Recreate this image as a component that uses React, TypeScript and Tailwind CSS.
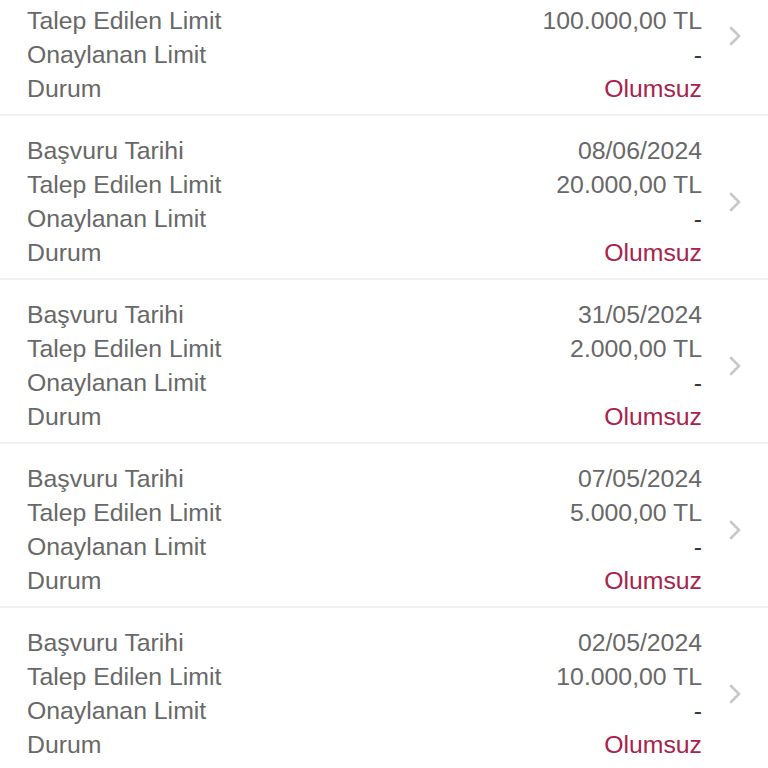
const applications = [
  { date: null, requested: "100.000,00 TL" },
  { date: "08/06/2024", requested: "20.000,00 TL" },
  { date: "31/05/2024", requested: "2.000,00 TL" },
  { date: "07/05/2024", requested: "5.000,00 TL" },
  { date: "02/05/2024", requested: "10.000,00 TL" },
];

function Chevron() {
  return (
    <svg width="14" height="22" viewBox="0 0 14 22" fill="none" className="shrink-0">
      <path d="M3 3l8 8-8 8" stroke="#c7c7cc" strokeWidth="2.6" strokeLinecap="round" strokeLinejoin="round" />
    </svg>
  );
}

function Row({ label, children }: { label: string; children: React.ReactNode }) {
  return (
    <div className="flex h-[34px] items-center justify-between">
      <span>{label}</span>
      {children}
    </div>
  );
}

export default function App() {
  return (
    <div className="h-[768px] overflow-hidden bg-white font-['Liberation_Sans',Arial,sans-serif] text-[24.8px] text-[#686868]">
      {applications.map((app) => (
        <div
          key={app.requested}
          className={
            app.date
              ? "flex items-center border-b-2 border-[#f1f1f1] pb-[8px] pl-[27px] pr-[26px] pt-[18px]"
              : "flex items-center border-b-2 border-[#f1f1f1] pb-[8px] pl-[27px] pr-[26px] pt-[4px]"
          }
        >
          <div className="flex-1">
            {app.date && (
              <Row label="Başvuru Tarihi">
                <span>{app.date}</span>
              </Row>
            )}
            <Row label="Talep Edilen Limit">
              <span>{app.requested}</span>
            </Row>
            <Row label="Onaylanan Limit">
              <span className="text-[#333333]">-</span>
            </Row>
            <Row label="Durum">
              <span className="text-[#a8224a]">Olumsuz</span>
            </Row>
          </div>
          <div className={app.date ? "ml-[26px]" : "ml-[26px] mt-[-38px]"}>
            <Chevron />
          </div>
        </div>
      ))}
    </div>
  );
}
